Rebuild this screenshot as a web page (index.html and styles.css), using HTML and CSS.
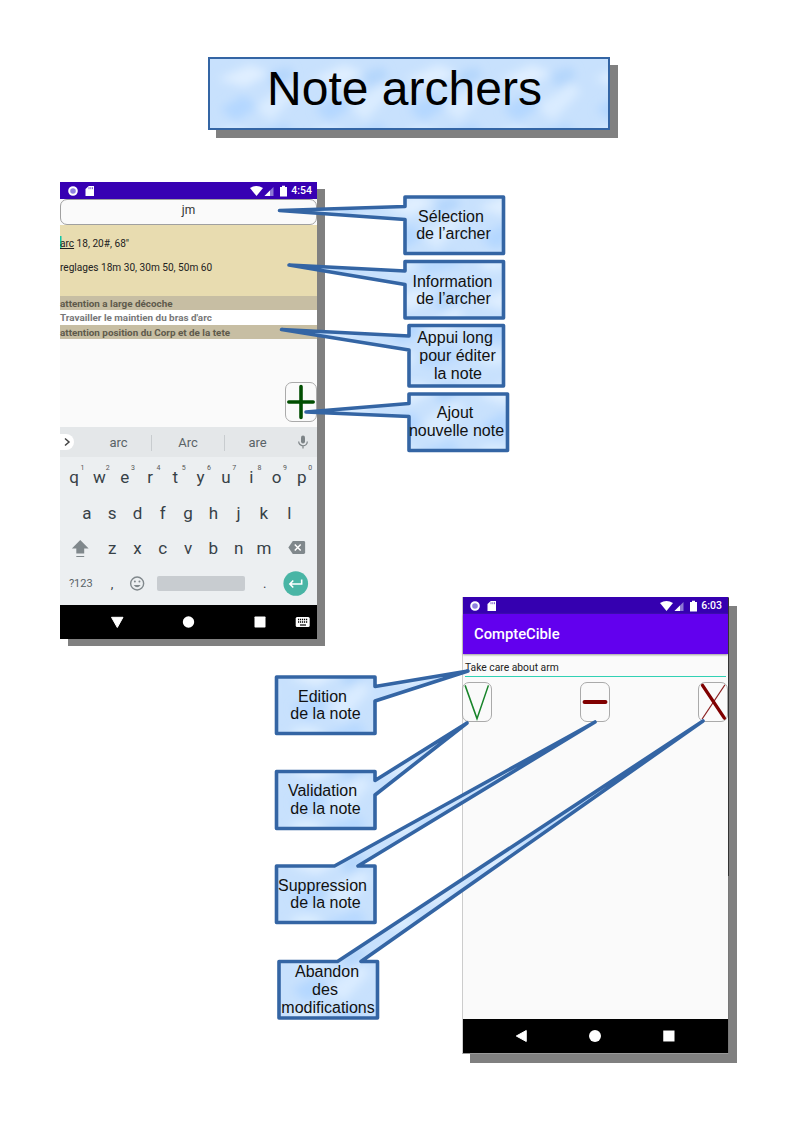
FILE: index.html
```html
<!DOCTYPE html>
<html lang="fr">
<head>
<meta charset="utf-8">
<title>Note archers</title>
<link rel="stylesheet" href="styles.css">
</head>
<body>
<main class="page">
  <header class="title"><svg class="title-bg"><rect width="100%" height="100%" fill="url(#clouds)"/></svg><h1>Note archers</h1></header>

  <section class="phone phone-list">
    <div class="status">
      <svg class="st-left" viewBox="0 0 40 16"><circle cx="8" cy="8" r="3.800" fill="#8f80e0" stroke="#fff" stroke-width="2"/><path d="M23.800 3h5.200v10h-8.500v-7z" fill="#fff"/><path d="M24 4.200v2M25.800 4.200v2M27.500 4.200v2" stroke="#3700b3" stroke-width=".6"/></svg>
      <svg class="st-right" viewBox="0 0 42 16"><path d="M1 5q6.500-4 13 0L7.500 13z" fill="#fff"/><path d="M15.500 13L24.500 4v9z" fill="#8c77d4"/><path d="M15.500 13l5.500-5.500v5.500z" fill="#fff"/><path d="M31 4h2v-1.200h3v1.200h2v9.500h-7z" fill="#fff"/></svg>
      <span>4:54</span>
    </div>
    <div class="archer">jm</div>
    <div class="info"><p><u>arc</u> 18, 20#, 68"</p><p>reglages 18m 30, 30m 50, 50m 60</p></div>
    <ul class="notes"><li>attention a large décoche</li><li>Travailler le maintien du bras d'arc</li><li>attention position du Corp et de la tete</li></ul>
    <div class="add-area"><div class="btn"><svg viewBox="0 0 32 40"><path d="M16 3.500v33M3 20h26" stroke="#004d00" stroke-width="3.800" stroke-linecap="round"/></svg></div></div>
    <div class="keyboard">
      <div class="suggest">
        <svg class="expand" viewBox="0 0 16 18"><path d="M0 1h7a8 8 0 010 16H0z" fill="#fff"/><path d="M6 5.500l4 3.500-4 3.500" fill="none" stroke="#444" stroke-width="1.500"/></svg>
        <span>arc</span><span>Arc</span><span>are</span>
        <svg class="mic" viewBox="0 0 12 16"><rect x="4" y="1.500" width="4" height="8" rx="2" fill="#7d8487"/><path d="M1.700 7.500a4.300 4.300 0 008.600 0M6 11.500v3" fill="none" stroke="#7d8487" stroke-width="1.200"/></svg>
      </div>
      <div class="keys top"><b>q<sup>1</sup></b><b>w<sup>2</sup></b><b>e<sup>3</sup></b><b>r<sup>4</sup></b><b>t<sup>5</sup></b><b>y<sup>6</sup></b><b>u<sup>7</sup></b><b>i<sup>8</sup></b><b>o<sup>9</sup></b><b>p<sup>0</sup></b></div>
      <div class="keys inset"><b>a</b><b>s</b><b>d</b><b>f</b><b>g</b><b>h</b><b>j</b><b>k</b><b>l</b></div>
      <div class="keys">
        <svg class="wide" viewBox="0 0 38 34"><path d="M18.500 9l8.500 8.500h-4.500v5h-8v-5H10zM14.500 25h8v1h-8z" fill="#80888c"/></svg>
        <b>z</b><b>x</b><b>c</b><b>v</b><b>b</b><b>n</b><b>m</b>
        <svg class="wide" viewBox="0 0 38 34"><path d="M16 10h11q1.500 0 1.500 1.500v10q0 1.500-1.500 1.500H16l-4.500-6.500z" fill="#80888c"/><path d="M18 13.500l6 6M24 13.500l-6 6" stroke="#fff" stroke-width="1.500"/></svg>
      </div>
      <div class="keys">
        <b class="key-wide">?123</b><b class="comma">,</b>
        <svg class="one" viewBox="0 0 25 34"><circle cx="12" cy="16.500" r="6.500" fill="none" stroke="#80888c" stroke-width="1.400"/><circle cx="9.700" cy="14.500" r="1" fill="#80888c"/><circle cx="14.300" cy="14.500" r="1" fill="#80888c"/><path d="M8.500 18q3.500 4.500 7 0z" fill="#80888c"/></svg>
        <i class="space"></i><b class="comma">.</b>
        <svg class="wide" viewBox="0 0 38 34"><circle cx="19" cy="16.500" r="12.500" fill="#49b5a5"/><path d="M25 12.500v4.500H13M16.500 13.500L13 17l3.500 3.500" fill="none" stroke="#fff" stroke-width="1.600"/></svg>
      </div>
    </div>
    <svg class="nav" viewBox="0 0 257 34"><path d="M51.500 12.300h11.500L57.300 22.500z" fill="#fff" stroke="#fff" stroke-linejoin="round"/><circle cx="128.500" cy="17" r="5.700" fill="#fff"/><rect x="194.500" y="11.500" width="11" height="11" rx=".7" fill="#fff"/><rect x="235.700" y="12" width="14" height="10" rx="1.500" fill="#fff"/><path d="M238 14.500h10M238 17h10" stroke="#000" stroke-width="1.300" stroke-dasharray="1.200 .8"/><path d="M240 20h6" stroke="#000" stroke-width="1.200"/></svg>
  </section>

  <section class="phone phone-edit">
    <div class="status">
      <svg class="st-left" viewBox="0 0 40 16"><circle cx="8" cy="8" r="3.800" fill="#8f80e0" stroke="#fff" stroke-width="2"/><path d="M23.800 3h5.200v10h-8.500v-7z" fill="#fff"/><path d="M24 4.200v2M25.800 4.200v2M27.500 4.200v2" stroke="#3700b3" stroke-width=".6"/></svg>
      <svg class="st-right" viewBox="0 0 42 16"><path d="M1 5q6.500-4 13 0L7.500 13z" fill="#fff"/><path d="M15.500 13L24.500 4v9z" fill="#8c77d4"/><path d="M15.500 13l5.500-5.500v5.500z" fill="#fff"/><path d="M31 4h2v-1.200h3v1.200h2v9.500h-7z" fill="#fff"/></svg>
      <span>6:03</span>
    </div>
    <div class="appbar">CompteCible</div>
    <div class="field">Take care about arm</div>
    <div class="actions">
      <div class="btn"><svg viewBox="0 0 29 40"><path d="M2 2.500L14.500 37.500 26.500 2.500" fill="none" stroke="#18842a" stroke-width="1.600"/></svg></div>
      <div class="btn"><svg viewBox="0 0 29 40"><path d="M3.500 20h22" stroke="#800000" stroke-width="4.200" stroke-linecap="round"/></svg></div>
      <div class="btn"><svg viewBox="0 0 29 40"><path d="M27 2L3 38" stroke="#8a2020" stroke-width="1.100"/><path d="M3.500 2.500l23 34.500" stroke="#800000" stroke-width="3.500" stroke-linecap="round"/></svg></div>
    </div>
    <svg class="nav" viewBox="0 0 266 34"><path d="M53.500 17l10-5.500v11z" fill="#fff" stroke="#fff" stroke-linejoin="round"/><circle cx="132.500" cy="17" r="6" fill="#fff"/><rect x="201" y="11.500" width="11.300" height="11" fill="#fff"/></svg>
    <i class="edge"></i>
  </section>

  <svg class="callouts" viewBox="0 0 794 1123">
    <defs>
      <filter id="soft" x="-50%" y="-50%" width="200%" height="200%"><feGaussianBlur stdDeviation="5"/></filter>
      <pattern id="clouds" width="94" height="94" patternUnits="userSpaceOnUse">
        <rect width="94" height="94" fill="#c8e1fd"/>
        <g filter="url(#soft)">
          <path d="M8 20L40 6l20 8-25 14z" fill="#e0efff"/>
          <path d="M45 48l34-24 10 8-28 30z" fill="#daecff"/>
          <path d="M10 50l24-14 14 12-22 14z" fill="#b4d7ff"/>
          <path d="M58 14l22-6 4 11-20 10z" fill="#b4d6fc"/>
          <path d="M44 76l32-12 10 12-36 10z" fill="#b6d8ff"/>
          <ellipse cx="24" cy="76" rx="15" ry="7" fill="#dceeff"/>
        </g>
      </pattern>
    </defs>
    <g class="shape">
      <path d="M405 197H503.500V253.500H405V219.500L279.500 210.500 405 206.500z"/>
      <path d="M405 261.500H503.500V318H405V284.500L289 265 405 271z"/>
      <path d="M409 325.500H503.500V386H409V350L281.500 329.500 409 336z"/>
      <path d="M409 394H507.500V450.500H409V416.500L306 412 409 403.500z"/>
      <path d="M276.500 677H375V686.500L468 671 375 701V733.500H276.500z"/>
      <path d="M276.500 771.500H375V780.500L467 723 375 795V828.500H276.500z"/>
      <path d="M276.500 866H334.500L595 722 358 866H375V922.500H276.500z"/>
      <path d="M279 961.500H337.500L703 721 361 961.500H377.500V1018H279z"/>
    </g>
    <g class="label">
      <text x="451" y="222">Sélection</text><text x="453.500" y="239">de l’archer</text>
      <text x="452.500" y="286.500">Information</text><text x="453.500" y="304">de l’archer</text>
      <text x="455" y="343">Appui long</text><text x="457.500" y="361">pour éditer</text><text x="458" y="379">la note</text>
      <text x="455" y="418">Ajout</text><text x="456.500" y="436">nouvelle note</text>
      <text x="322.500" y="702">Edition</text><text x="325.500" y="719">de la note</text>
      <text x="322.500" y="796">Validation</text><text x="325.500" y="814">de la note</text>
      <text x="322.500" y="891">Suppression</text><text x="325.500" y="908">de la note</text>
      <text x="327" y="977">Abandon</text><text x="325" y="995">des</text><text x="328" y="1013">modifications</text>
    </g>
  </svg>
</main>
</body>
</html>
```
FILE: styles.css
```css
* { box-sizing: border-box; }
body { margin: 0; background: #fff; }
p, ul, h1 { margin: 0; padding: 0; }
svg { display: block; flex: none; }
.page { position: relative; width: 794px; height: 1123px; overflow: hidden; font-family: Roboto, sans-serif; }

.title { position: absolute; left: 207.500px; top: 56.500px; width: 402px; height: 73px; border: 2px solid #3465a4; box-shadow: 8px 8px 0 #808080; }
.title-bg { position: absolute; inset: 0; width: 100%; height: 100%; }
h1 { position: relative; font: 48px/60px "Liberation Sans", Arial, sans-serif; text-align: center; padding-right: 8px; }

.phone { position: absolute; display: flex; flex-direction: column; background: #fafafa; }
.phone-list { left: 60px; top: 182px; width: 257px; height: 457px; box-shadow: 8px 7px 0 #808080; }
.phone-edit { left: 462px; top: 597px; width: 267px; height: 457px; box-shadow: 8px 9px 0 #808080; border-left: 1px solid #ccc; border-right: 1px solid #777; border-bottom: 1px solid #999; }
.edge { position: absolute; right: -1px; top: 1px; width: 1.500px; height: 278px; background: #333; }
.status { display: flex; align-items: center; height: 17px; flex: none; background: #3700b3; color: #fff; font-size: 10.500px; font-weight: 500; padding: 0 5px; }
.phone-edit .status { background: #3500b0; padding-left: 4px; padding-right: 6px; }
.st-left { width: 40px; height: 16px; }
.st-right { width: 42px; height: 16px; margin-left: auto; }

.archer { flex: none; height: 26px; border: 1px solid #a0a0a0; border-radius: 7px; text-align: center; font-size: 12px; line-height: 20px; color: #333; }
.info { flex: none; height: 71px; padding-top: 7px; background: #e8dcb0; font-size: 10.100px; line-height: 24px; color: #222; white-space: nowrap; }
.info p:first-child { background: linear-gradient(#12c6a5, #12c6a5) 0 4px / 1.500px 13px no-repeat; }
.notes { list-style: none; flex: none; font-size: 9.900px; font-weight: 700; color: #777; white-space: nowrap; }
.notes li { height: 14.300px; line-height: 15px; background: #c7bea3; color: #5e5a4c; }
.notes li:nth-child(2) { background: #fff; color: #777; }
.btn { border: 1px solid #aaa; border-radius: 7px; background: #fafafa; height: 40px; width: 30px; }
.btn svg { width: 100%; height: 100%; }
.add-area { flex: 1; display: flex; justify-content: flex-end; align-items: flex-end; padding: 0 0 5px; }
.add-area .btn { width: 32px; }

.keyboard { flex: none; height: 178px; background: #eceff1; color: #374147; }
.suggest { display: flex; align-items: center; height: 30px; background: #e4e7e9; font-size: 13px; color: #5a6367; margin-bottom: 3px; }
.expand { width: 16px; height: 18px; margin-left: -1px; }
.suggest span { flex: 0 0 73px; text-align: center; line-height: 16px; border-right: 1px solid #c8cccf; margin-top: 2px; }
.suggest span:nth-of-type(1) { flex-basis: 77px; padding-left: 11px; }
.suggest span:nth-of-type(3) { flex-basis: 65px; border: 0; }
.mic { width: 12px; height: 16px; margin-left: 7px; }
.keys { display: flex; align-items: center; height: 35.300px; padding: 0 2px; font-size: 17px; }
.keys.top { padding: 0 1.500px; }
.keys.top b { top: -1px; }
.keys.inset { padding: 0 14.200px; }
.keys b { position: relative; flex: 0 0 25.300px; text-align: center; font-weight: 400; }
.keys sup { position: absolute; left: 19px; top: -3px; font-size: 7px; line-height: 8px; color: #555; }
.wide { width: 37.500px; height: 34px; }
.keys .key-wide { flex-basis: 37.500px; font-size: 11px; color: #5a6367; }
.keys .comma { font-size: 13px; }
.one { width: 25.300px; height: 34px; }
.space { flex: none; width: 88px; height: 15px; margin: 0 7px; border-radius: 2px; background: #c8ccd0; }
.nav { width: 100%; height: 34px; background: #000; }

.appbar { flex: none; height: 40px; background: #6200ee; color: #fff; font-size: 14.800px; font-weight: 500; line-height: 41px; padding-left: 11px; box-shadow: 0 1px 2px #999; }
.field { flex: none; height: 23px; margin: 0 2px; padding-top: 6px; font-size: 10.300px; line-height: 16px; color: #222; border-bottom: 1.500px solid #31d1b4; }
.actions { flex: 1; display: flex; justify-content: space-between; padding-top: 5px; margin-left: -1px; }

.callouts { position: absolute; inset: 0; width: 794px; height: 1123px; }
.shape path { fill: url(#clouds); stroke: #3465a4; stroke-width: 3.600px; stroke-linejoin: round; }
.label text { font: 16px "Liberation Sans", Arial, sans-serif; text-anchor: middle; fill: #111; }
```
